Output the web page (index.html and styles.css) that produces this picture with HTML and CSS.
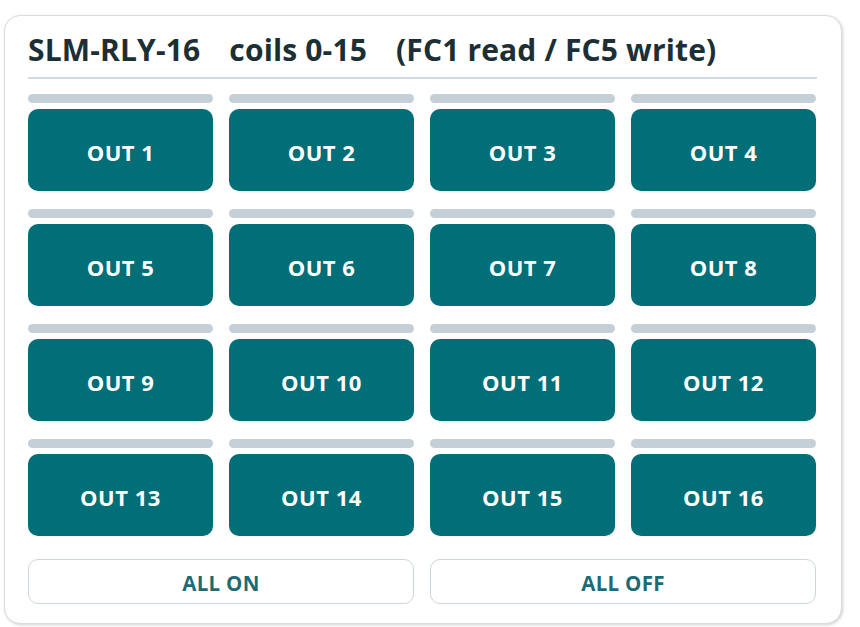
FILE: index.html
```html
<!DOCTYPE html>
<html>
<head>
<meta charset="utf-8">
<link rel="stylesheet" href="styles.css">
</head>
<body>
<div class="card">
  <h1 class="title"><span>SLM-RLY-16</span><span>coils 0-15</span><span>(FC1 read / FC5 write)</span></h1>
  <div class="grid">
    <div class="cell"><div class="bar"></div><button class="out">OUT 1</button></div>
    <div class="cell"><div class="bar"></div><button class="out">OUT 2</button></div>
    <div class="cell"><div class="bar"></div><button class="out">OUT 3</button></div>
    <div class="cell"><div class="bar"></div><button class="out">OUT 4</button></div>
    <div class="cell"><div class="bar"></div><button class="out">OUT 5</button></div>
    <div class="cell"><div class="bar"></div><button class="out">OUT 6</button></div>
    <div class="cell"><div class="bar"></div><button class="out">OUT 7</button></div>
    <div class="cell"><div class="bar"></div><button class="out">OUT 8</button></div>
    <div class="cell"><div class="bar"></div><button class="out">OUT 9</button></div>
    <div class="cell"><div class="bar"></div><button class="out">OUT 10</button></div>
    <div class="cell"><div class="bar"></div><button class="out">OUT 11</button></div>
    <div class="cell"><div class="bar"></div><button class="out">OUT 12</button></div>
    <div class="cell"><div class="bar"></div><button class="out">OUT 13</button></div>
    <div class="cell"><div class="bar"></div><button class="out">OUT 14</button></div>
    <div class="cell"><div class="bar"></div><button class="out">OUT 15</button></div>
    <div class="cell"><div class="bar"></div><button class="out">OUT 16</button></div>
  </div>
  <div class="actions">
    <button class="all">ALL ON</button>
    <button class="all">ALL OFF</button>
  </div>
</div>
</body>
</html>
```
FILE: styles.css
```css
html, body {
  margin: 0;
  padding: 0;
  background: #ffffff;
  font-family: "Open Sans", "Noto Sans", sans-serif;
}
body {
  width: 860px;
  height: 627px;
  overflow: hidden;
}
.card {
  box-sizing: border-box;
  margin: 15px 0 0 4px;
  width: 838px;
  height: 609px;
  border: 1px solid #d6dce0;
  border-radius: 16px;
  box-shadow: 1px 1px 3px rgba(0, 0, 0, 0.18);
  padding: 0 24px 0 23px;
  background: #fff;
}
.title {
  display: flex;
  column-gap: 29px;
  margin: 0;
  padding: 14px 0 7px;
  font-size: 30px;
  line-height: 40px;
  letter-spacing: 0.15px;
  font-weight: 700;
  color: #1b2f35;
  border-bottom: 2px solid #d3dbe1;
  white-space: nowrap;
}
.grid {
  display: grid;
  grid-template-columns: repeat(4, 185px);
  column-gap: 16px;
  row-gap: 18px;
  margin-top: 15px;
}
.cell {
  display: flex;
  flex-direction: column;
  gap: 6px;
}
.bar {
  height: 9px;
  border-radius: 5px;
  background: #c5cfd7;
}
.out {
  height: 82px;
  border: none;
  border-radius: 10px;
  background: #016e78;
  color: #ffffff;
  font-family: "Open Sans", "Noto Sans", sans-serif;
  font-weight: 700;
  font-size: 22px;
  letter-spacing: 0.5px;
  padding: 3px 0 0;
}
.actions {
  display: grid;
  grid-template-columns: repeat(2, 386px);
  column-gap: 16px;
  margin-top: 23px;
}
.all {
  height: 45px;
  box-sizing: border-box;
  border: 1.5px solid #cdd6dc;
  border-radius: 10px;
  background: #fff;
  color: #1c6b74;
  font-family: "Open Sans", "Noto Sans", sans-serif;
  font-weight: 700;
  font-size: 20.5px;
  letter-spacing: 0.3px;
  padding: 3px 0 0;
}
```
